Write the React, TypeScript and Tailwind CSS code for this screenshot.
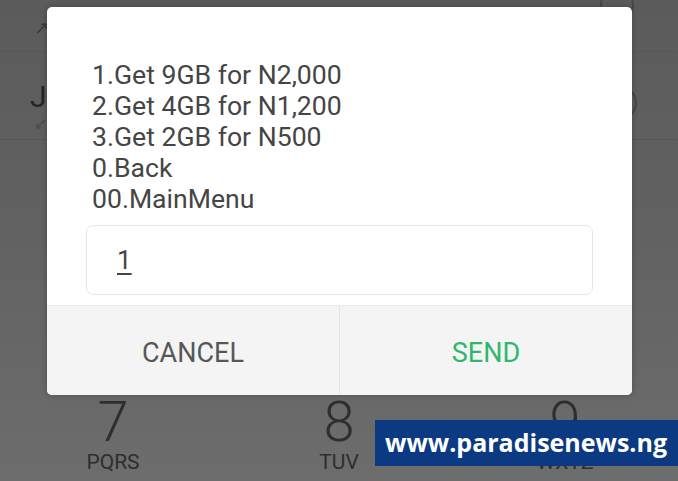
import React from "react";

const lines = [
  "1.Get 9GB for N2,000",
  "2.Get 4GB for N1,200",
  "3.Get 2GB for N500",
  "0.Back",
  "00.MainMenu",
];

function Key({ digit, letters }: { digit: string; letters: string }) {
  return (
    <div className="flex flex-col items-center text-[#2e2e2e]">
      <span className="text-[56px] leading-[44px] font-light" style={{ fontFamily: "Roboto, sans-serif" }}>
        {digit}
      </span>
      <span className="text-[21px] leading-[26px] mt-[5px]" style={{ fontFamily: "Roboto, sans-serif" }}>
        {letters}
      </span>
    </div>
  );
}

export default function App() {
  return (
    <div className="relative w-[678px] h-[481px] overflow-hidden bg-gradient-to-b from-[#5b5b5b] via-[#626262] to-[#6d6d6d] font-['Roboto',sans-serif]">
      {/* backdrop: dialer list and keypad */}
      <div className="absolute inset-0 flex flex-col">
        <div className="h-[52px] border-b border-[#575757] relative">
          <span className="absolute left-[34px] top-[14px] text-[#3a3a3a] text-[18px]">↗</span>
          <div className="absolute left-[600px] top-[-12px] w-[34px] h-[34px] rounded-full border-2 border-[#474747]" />
        </div>
        <div className="h-[88px] border-b border-[#585858] relative">
          <span className="absolute left-[30px] top-[22px] text-[#262626] text-[30px]">J</span>
          <span className="absolute left-[34px] top-[60px] text-[#4a4a4a] text-[16px]">↙</span>
          <div className="absolute left-[603px] top-[34px] w-[34px] h-[34px] rounded-full border-2 border-[#474747]" />
        </div>
        <div className="flex-1" />
        <div className="grid grid-cols-3 pb-[6px]">
          <div className="flex justify-center">
            <Key digit="7" letters="PQRS" />
          </div>
          <div className="flex justify-center">
            <Key digit="8" letters="TUV" />
          </div>
          <div className="flex justify-center">
            <Key digit="9" letters="WXYZ" />
          </div>
        </div>
      </div>

      {/* dialog */}
      <div className="absolute left-[47px] top-[7px] w-[585px] h-[388px] bg-white rounded-[5px] overflow-hidden flex flex-col shadow-[0_0_6px_rgba(0,0,0,0.25)]">
        <div className="pt-[52px] pl-[45px] text-[#454545] text-[26.6px] leading-[31px]">
          {lines.map((l) => (
            <div key={l}>{l}</div>
          ))}
        </div>
        <div className="mt-[11px] mx-[39px] h-[70px] rounded-[7px] border border-[#e6e6e6] flex items-center pl-[30px]">
          <span className="text-[26px] text-[#444] underline underline-offset-[4px] decoration-[1.5px]">1</span>
        </div>
        <div className="mt-[10px] flex-1 flex bg-[#f4f4f4] border-t border-[#ececec]">
          <div className="flex-1 flex items-center justify-center pt-[5px] text-[27px] text-[#575757] border-r border-[#e4e4e4]">
            CANCEL
          </div>
          <div className="flex-1 flex items-center justify-center pt-[5px] text-[27px] text-[#2fb86c]">
            SEND
          </div>
        </div>
      </div>

      {/* watermark */}
      <div className="absolute left-[375px] top-[420px] w-[303px] h-[46px] bg-[#0b3a82] flex items-center pl-[10px]">
        <span className="text-white font-bold text-[25px]" style={{ fontFamily: "'Open Sans', sans-serif" }}>
          www.paradisenews.ng
        </span>
      </div>
    </div>
  );
}
